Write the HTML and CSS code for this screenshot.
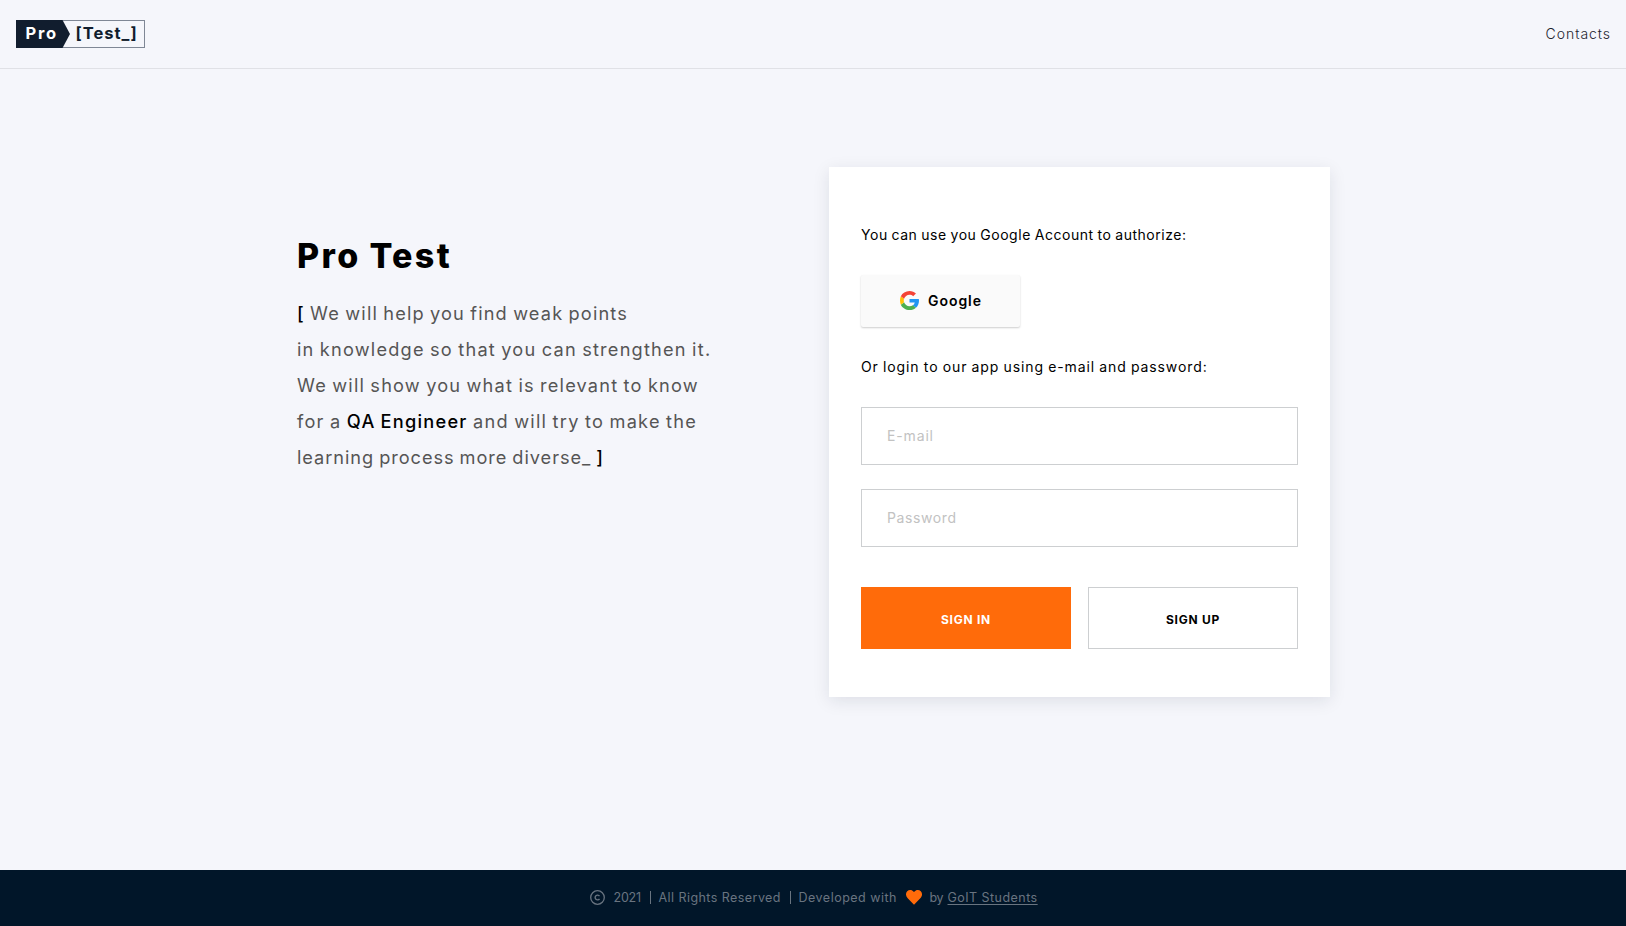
FILE: index.html
```html
<!DOCTYPE html>
<html lang="en">
<head>
<meta charset="utf-8">
<title>Pro Test</title>
<link rel="stylesheet" href="styles.css">
</head>
<body>
<header class="header">
  <a class="logo" href="#"><span class="logo-pro">Pro</span><span class="logo-test">[Test_]</span></a>
  <a class="contacts" href="#">Contacts</a>
</header>
<main class="main">
  <section class="intro">
    <h1 class="title">Pro Test</h1>
    <p class="lead">
      <span class="line line-1"><b>[</b> We will help you find weak points</span>
      <span class="line line-2">in knowledge so that you can strengthen it.</span>
      <span class="line line-3">We will show you what is relevant to know</span>
      <span class="line line-4">for a <b>QA Engineer</b> and will try to make the</span>
      <span class="line line-5">learning process more diverse_ <b>]</b></span>
    </p>
  </section>
  <form class="card">
    <p class="hint hint-google">You can use you Google Account to authorize:</p>
    <button class="google" type="button">
      <svg class="google-icon" viewBox="0 0 48 48"><path fill="#2196f3" d="M47.500 20H24v9.100h13.200c-.6 3-2.300 5.600-4.900 7.300l8 6.100C44.900 38 48 31.800 48 24.600c0-1.600-.2-3.100-.5-4.600z"/><path fill="#4caf50" d="M24 48c6.600 0 12.200-2.200 16.300-5.900l-8-6.100c-2.200 1.500-5 2.400-8.300 2.400-6.400 0-11.800-4.300-13.700-10.100l-8.200 6.300C6.100 42.600 14.400 48 24 48z"/><path fill="#ffc107" d="M10.300 28.300c-.5-1.400-.8-2.900-.8-4.400s.3-3 .8-4.400l-8.200-6.200C.7 16.500 0 20 0 24s.8 7.500 2.100 10.600z"/><path fill="#f44336" d="M24 9.500c3.600 0 6.800 1.200 9.300 3.600l7-7C36.200 2.300 30.600 0 24 0 14.400 0 6.100 5.400 2.100 13.300l8.200 6.300C12.200 13.800 17.600 9.500 24 9.500z"/></svg>
      <span>Google</span>
    </button>
    <p class="hint hint-mail">Or login to our app using e-mail and password:</p>
    <input class="field field-mail" type="email" placeholder="E-mail" aria-label="E-mail">
    <input class="field field-pass" type="password" placeholder="Password" aria-label="Password">
    <div class="actions">
      <button class="btn btn-main" type="button">SIGN IN</button>
      <button class="btn" type="button">SIGN UP</button>
    </div>
  </form>
</main>
<footer class="footer">
  <svg class="copy" viewBox="0 0 15 15" fill="none" stroke="currentColor"><circle cx="7.500" cy="7.500" r="6.800" stroke-width="1.300"/><path d="M9.500 6.100A2.400 2.400 0 1 0 9.500 8.900" stroke-width="1.400"/></svg>
  <span class="year">2021</span>
  <i class="bar"></i>
  <span class="rights">All Rights Reserved</span>
  <i class="bar"></i>
  <span class="dev">Developed with</span>
  <svg class="heart" viewBox="0 0 16 15"><path fill="#ff6b0a" d="M8 14.800 1.700 8.300C-.5 6-.5 3 1.200 1.300 3-.5 6-.4 8 2.100 10-.4 13-.5 14.800 1.300 16.500 3 16.500 6 14.300 8.300z"/></svg>
  <span class="by">by</span>
  <a class="students" href="#">GoIT Students</a>
</footer>
</body>
</html>
```
FILE: styles.css
```css
* { box-sizing: border-box; }

body {
  display: flex;
  flex-direction: column;
  min-height: 100vh;
  margin: 0;
  background: #f5f6fb;
  color: #000;
  font-family: Inter, sans-serif;
  font-size: 14px;
}

p, h1 { margin: 0; }

.header {
  display: flex;
  justify-content: space-between;
  align-items: center;
  height: 69px;
  padding: 0 15px 0 16px;
  border-bottom: 1px solid #e0e1e6;
}

.logo {
  display: flex;
  width: 129px;
  height: 28px;
  border: 1px solid #7f8795;
  color: #111d2e;
  font-size: 16.500px;
  font-weight: 700;
  line-height: 24px;
  text-decoration: none;
}

.logo-pro {
  width: 54px;
  height: 28px;
  margin: -1px 0 0 -1px;
  padding: 1px 0 0 9.500px;
  background: #111d2e;
  clip-path: polygon(0 0, 46.500px 0, 100% 50%, 46.500px 100%, 0 100%);
  color: #fff;
  letter-spacing: 1.8px;
}

.logo-test {
  padding-left: 5.500px;
  letter-spacing: 1px;
}

.contacts {
  padding-bottom: 2px;
  color: #1d242f;
  font-weight: 300;
  letter-spacing: .95px;
  text-decoration: none;
}

.main {
  display: grid;
  grid-template-columns: 532px 501px;
  align-items: start;
  flex: 1;
  padding: 98px 0 0 297px;
}

.intro { padding-top: 69px; }

.title {
  margin-bottom: 19px;
  font-size: 34px;
  font-weight: 800;
  line-height: 40px;
  letter-spacing: 2.35px;
  word-spacing: -1px;
}

.lead {
  color: #555;
  font-size: 18.200px;
  line-height: 36px;
  word-spacing: -1px;
}

.lead b { color: #000; font-weight: 500; }
.line { display: block; white-space: nowrap; }
.line-1 { letter-spacing: 1.15px; }
.line-2 { letter-spacing: 1.2px; }
.line-3 { letter-spacing: 1.18px; }
.line-4 { letter-spacing: 1.24px; }
.line-5 { letter-spacing: .94px; }

.card {
  height: 530px;
  padding: 58px 32px 48px;
  background: #fff;
  box-shadow: 0 4px 16px rgba(17, 29, 46, .1);
}

.hint { line-height: 20px; white-space: nowrap; word-spacing: -.6px; }
.hint-google { letter-spacing: .53px; }
.hint-mail { letter-spacing: .9px; }

.google {
  display: flex;
  align-items: center;
  width: 159px;
  height: 52px;
  margin: 30px 0;
  padding: 0 0 1px 38.500px;
  gap: 9.500px;
  border: 0;
  border-radius: 2px;
  background: #fafafa;
  box-shadow: 0 1px 2px rgba(0, 0, 0, .2);
  color: #000;
  font: 600 14px Inter, sans-serif;
  letter-spacing: .95px;
}

.google-icon { width: 19px; height: 19px; }

.field {
  display: block;
  width: 100%;
  height: 58px;
  padding: 0 25px 2px;
  border: 1px solid #cdcfd1;
  border-radius: 0;
  background: #fff;
  font: 400 14px Inter, sans-serif;
}

.hint-mail + .field { margin: 30px 0 24px; }
.field::placeholder { color: #c2c2c2; opacity: 1; }
.field-mail { letter-spacing: .85px; }
.field-pass { letter-spacing: .6px; }

.actions {
  display: grid;
  grid-template-columns: 210px 210px;
  justify-content: space-between;
  margin-top: 40px;
}

.btn {
  height: 62px;
  padding: 2px 0 0;
  border: 1px solid #cdcfd1;
  background: #fff;
  color: #000;
  font: 700 12px Inter, sans-serif;
  letter-spacing: .75px;
}

.btn-main {
  border-color: #ff6b0a;
  background: #ff6b0a;
  color: #fff;
}

.footer {
  display: flex;
  justify-content: center;
  align-items: center;
  height: 56px;
  padding: 0 0 1px 1px;
  background: #011629;
  color: #697480;
  font-size: 12.500px;
  white-space: nowrap;
}

.copy { width: 15px; height: 15px; margin-right: 9px; }
.year { width: 27px; letter-spacing: -.2px; }
.bar { width: 1px; height: 13px; margin: 0 8px 0 9px; background: currentColor; }
.rights { width: 122px; letter-spacing: .44px; }
.dev { width: 98px; margin-right: 9px; letter-spacing: .5px; }
.heart { width: 16px; height: 15px; margin-right: 8px; }
.by { width: 14px; margin-right: 4px; letter-spacing: -.3px; }
.students { width: 90px; color: inherit; letter-spacing: .46px; text-underline-offset: 2px; }
```
